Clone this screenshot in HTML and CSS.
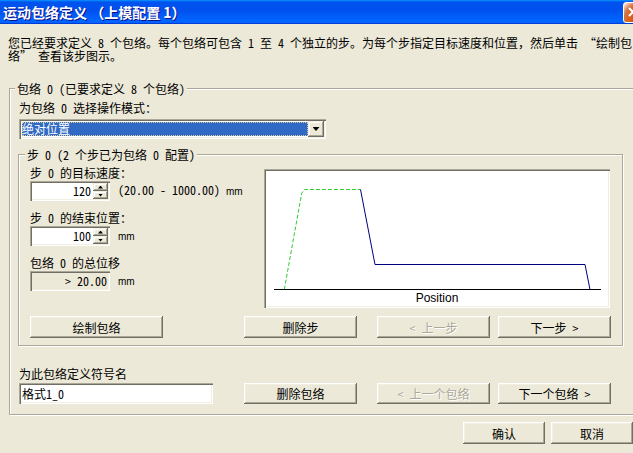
FILE: index.html
```html
<!DOCTYPE html>
<html lang="zh-CN">
<head>
    <meta charset="UTF-8">
    <meta name="viewport" content="width=device-width, initial-scale=1.0">
    <title>运动包络定义</title>
    <link rel="stylesheet" href="styles.css">
</head>
<body>
<div class="window">
    <div class="titlebar">
        <span class="title">运动包络定义 （上模配置 1）</span>
        <span class="close"><svg width="21" height="21" viewBox="0 0 21 21"><path d="M6 6 L14 14 M14 6 L6 14" stroke="#fff" stroke-width="2"/></svg></span>
    </div>

    <div class="client">
        <p class="intro">您已经要求定义 8 个包络。每个包络可包含 1 至 4 个独立的步。为每个步指定目标速度和位置，然后单击 “绘制包<br>络” 查看该步图示。</p>

        <fieldset class="group outer">
            <legend>包络 0 (已要求定义 8 个包络)</legend>
            <div class="label">为包络 0 选择操作模式：</div>
            <div class="combo sunken">
                <span class="combo-value">绝对位置</span>
                <span class="combo-btn raised"><i class="tri tri-down"></i></span>
            </div>

            <fieldset class="group inner">
                <legend>步 0 (2 个步已为包络 0 配置)</legend>
                <div class="step-body">
                    <div class="fields">
                        <div class="label">步 0 的目标速度：</div>
                        <div class="field-row">
                            <div class="spin sunken">
                                <span class="spin-val">120</span>
                                <span class="updown">
                                    <span class="ud raised"><i class="tri tri-up"></i></span>
                                    <span class="ud raised"><i class="tri tri-dn"></i></span>
                                </span>
                            </div>
                            <span class="unit">(20.00 - 1000.00) <span class="mm">mm</span></span>
                        </div>

                        <div class="label gap">步 0 的结束位置：</div>
                        <div class="field-row">
                            <div class="spin sunken">
                                <span class="spin-val">100</span>
                                <span class="updown">
                                    <span class="ud raised"><i class="tri tri-up"></i></span>
                                    <span class="ud raised"><i class="tri tri-dn"></i></span>
                                </span>
                            </div>
                            <span class="unit"><span class="mm">mm</span></span>
                        </div>

                        <div class="label gap">包络 0 的总位移</div>
                        <div class="field-row">
                            <div class="readonly sunken">&gt; 20.00</div>
                            <span class="unit"><span class="mm">mm</span></span>
                        </div>
                    </div>

                    <div class="chart sunken">
                        <svg width="342" height="135" viewBox="0 0 342 135">
                            <path d="M18.3 118.5 L35.7 22.3 L38.3 18.5 L94.5 18.5" fill="none" stroke="#3c3" stroke-dasharray="4 2"/>
                            <path d="M94.5 18.5 L109 93.5 L319 93.5 L324 118.5" fill="none" stroke="#000080"/>
                            <path d="M8 118.5 L335 118.5" stroke="#000"/>
                            <text x="171" y="131" text-anchor="middle" class="axis">Position</text>
                        </svg>
                    </div>
                </div>

                <div class="btn-row">
                    <span class="btn draw">绘制包络</span>
                    <span class="btn del">删除步</span>
                    <span class="btn prev disabled">&lt; 上一步</span>
                    <span class="btn next">下一步 &gt;</span>
                </div>
            </fieldset>

            <div class="label name-label">为此包络定义符号名</div>
            <div class="name-row">
                <div class="edit sunken">格式1_0</div>
                <span class="btn del">删除包络</span>
                <span class="btn prev disabled">&lt; 上一个包络</span>
                <span class="btn next">下一个包络 &gt;</span>
            </div>
        </fieldset>

        <div class="dialog-btns">
            <span class="btn">确认</span>
            <span class="btn">取消</span>
        </div>
    </div>
</div>
</body>
</html>
```

FILE: styles.css
```css
body{
    margin:0;
    background:#ECE9D8;
    overflow:hidden;
    font-family:"Noto Sans Mono CJK SC","Noto Sans CJK SC","Liberation Sans",sans-serif;
    font-size:12px;
    line-height:13px;
    color:#000;
    font-variant-ligatures:none;
}
.window{
    width:649px;
}

/* title bar, XP blue */
.titlebar{
    height:24px;
    display:flex;
    align-items:center;
    color:#fff;
    background:linear-gradient(180deg,#0997ff,#0053ee 8%,#0050ee 40%,#06f 88%,#06f 93%,#005bff 95%,#003dd7 96%,#003dd7);
}
.title{
    margin-left:3px;
    font-family:"Noto Sans CJK SC",sans-serif;
    font-size:14px;
    font-weight:bold;
    text-shadow:1px 1px #0f1089;
}
.close{
    margin-left:auto;
    margin-right:5px;
    width:21px;
    height:21px;
    box-sizing:border-box;
    border:1px solid #fff;
    border-radius:3px;
    background:radial-gradient(circle at 90% 90%,#cc4600 0%,#dc6527 55%,#cd7546 70%,#ffccb2 90%,#fff 100%);
    display:flex;
}
.close svg{
    margin:-1px;
}

.client{
    padding-top:12px;
}
.intro{
    margin:0 0 20px 8px;
}

/* etched group boxes */
.group{
    margin:0;
    border:1px solid #ACA899;
    box-shadow:inset 1px 1px #fff,1px 1px #fff;
    min-width:0;
    box-sizing:border-box;
}
.group legend{
    padding:0 2px;
    background:#ECE9D8;
    line-height:13px;
}
.outer{
    margin:0 5px 0 9px;
    padding:6px 0 10px 9px;
}
.outer > legend{
    margin-left:-4px;
}
.inner{
    width:605px;
    margin:9px 0 0 -1px;
    padding:5px 0 7px 11px;
}
.inner > legend{
    margin-left:-5px;
}

/* 3d edges */
.sunken{
    box-sizing:border-box;
    padding:2px;
    box-shadow:inset 1px 1px #ACA899,inset 2px 2px #716F64,inset -1px -1px #fff,inset -2px -2px #F1EFE2;
}
.raised{
    box-sizing:border-box;
    background:#ECE9D8;
    box-shadow:inset -1px -1px #716F64,inset 1px 1px #F1EFE2,inset -2px -2px #ACA899,inset 2px 2px #fff;
}

.combo{
    margin-top:5px;
    width:307px;
    height:20px;
    display:flex;
    background:#fff;
}
.combo-value{
    flex:1;
    margin:1px 0 0 1px;
    height:14px;
    line-height:14px;
    background:#316AC5;
    color:#fff;
    outline:1px dotted #d8d0a0;
    outline-offset:-1px;
}
.combo-btn{
    width:16px;
    height:16px;
    display:flex;
    align-items:center;
    justify-content:center;
}

.tri{
    display:block;
    background:#000;
}
.tri-down{
    width:7px;
    height:4px;
    clip-path:polygon(0 0,100% 0,50% 100%);
}
.tri-up{
    width:5px;
    height:3px;
    clip-path:polygon(50% 0,100% 100%,0 100%);
}
.tri-dn{
    width:5px;
    height:3px;
    clip-path:polygon(0 0,100% 0,50% 100%);
}

.step-body{
    display:flex;
}
.fields{
    width:234px;
}
.gap{
    margin-top:10px;
}
.field-row{
    display:flex;
    margin-top:2px;
}
.spin{
    width:80px;
    height:20px;
    display:flex;
    background:#fff;
}
.spin-val{
    flex:1;
    text-align:right;
    padding-right:2px;
    line-height:16px;
}
.updown{
    width:15px;
    display:flex;
    flex-direction:column;
}
.ud{
    height:8px;
    display:flex;
    align-items:center;
    justify-content:center;
}
.readonly{
    width:80px;
    height:20px;
    text-align:right;
    padding-right:3px;
    line-height:16px;
}
.unit{
    margin-left:8px;
    align-self:flex-end;
    margin-bottom:3px;
}
.mm{
    font-family:"Liberation Sans",Arial,sans-serif;
    font-size:10px;
}

.chart{
    margin-top:3px;
    width:346px;
    height:139px;
    background:#fff;
}
.chart svg{
    display:block;
}
.axis{
    font-family:"Liberation Sans",Arial,sans-serif;
    font-size:12px;
}

/* push buttons */
.btn{
    height:22px;
    box-sizing:border-box;
    display:flex;
    align-items:center;
    justify-content:center;
    background:#ECE9D8;
    box-shadow:inset -1px -1px #716F64,inset 1px 1px #fff,inset -2px -2px #ACA899,inset 2px 2px #F1EFE2;
}
.disabled{
    color:#ACA899;
    text-shadow:1px 1px #fff;
}
.btn-row,
.name-row{
    display:flex;
    margin-top:8px;
}
.draw{
    width:133px;
}
.del{
    width:113px;
    margin-left:81px;
}
.prev{
    width:113px;
    margin-left:20px;
}
.next{
    width:113px;
    margin-left:8px;
}
.name-label{
    margin-top:21px;
}
.name-row{
    margin-top:3px;
}
.name-row .btn{
    height:21px;
}
.name-row .del{
    margin-left:31px;
}
.edit{
    width:194px;
    height:21px;
    background:#fff;
    padding-left:3px;
    line-height:17px;
}

.dialog-btns{
    display:flex;
    gap:6px;
    margin-top:7px;
    padding-left:463px;
}
.dialog-btns .btn{
    width:82px;
}
```
